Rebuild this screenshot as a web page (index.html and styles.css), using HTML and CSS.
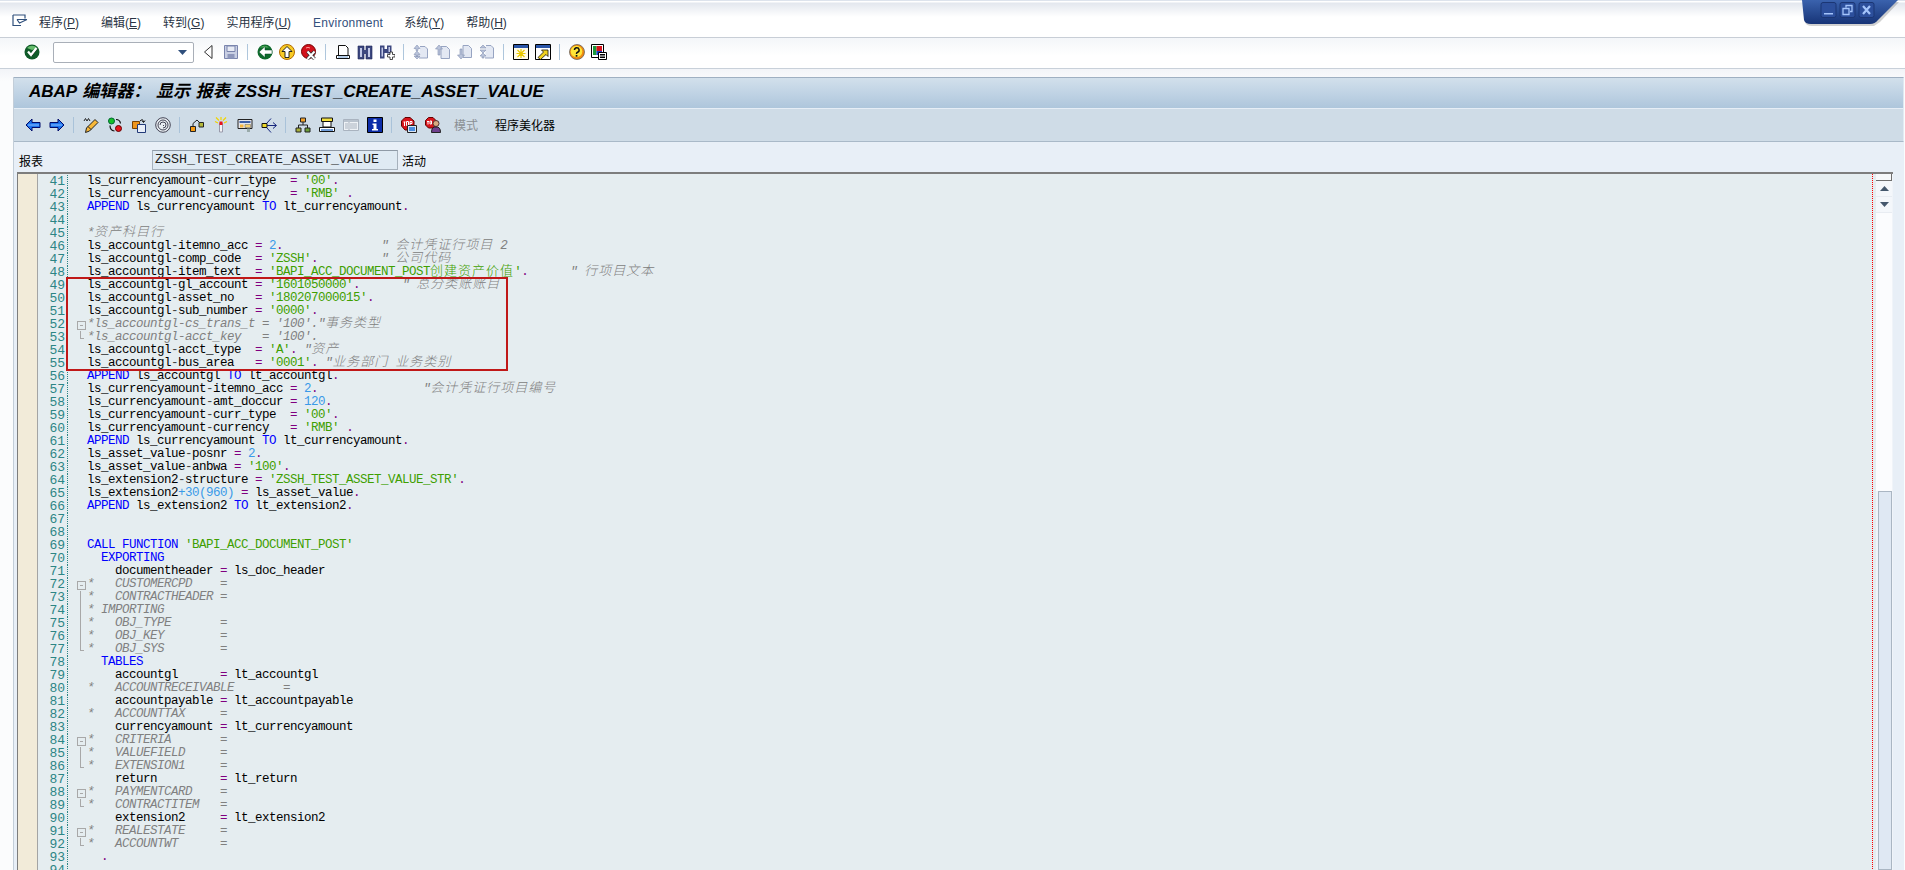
FILE: index.html
```html
<!DOCTYPE html>
<html lang="zh">
<head>
<meta charset="utf-8">
<title>ABAP 编辑器</title>
<link rel="stylesheet" href="styles.css">
</head>
<body>
<div class="winctl">
<svg width="100" height="28" viewBox="0 0 100 28"><defs><linearGradient id="wb" x1="0" y1="0" x2="0" y2="1"><stop offset="0" stop-color="#3a62ad"/><stop offset="1" stop-color="#173477"/></linearGradient></defs><path d="M1 2L3 22Q4 26 10 26L72 26L78 22L97 2Z" fill="#000" opacity=".18"/><path d="M0 0L2 20Q3 24 9 24L68 24Q73 24 76 20L96 0Z" fill="url(#wb)"/><g fill="#2c4f9c" stroke="#1b3674"><rect x="19" y="2.500" width="15" height="15" rx="2"/><rect x="38" y="2.500" width="15" height="15" rx="2"/><rect x="57" y="2.500" width="15" height="15" rx="2"/></g><path d="M22 13h9v1.500h-9z" fill="#a4c4fb"/><path d="M44 7.500v-2h6v6h-2M41 8.500h6v6h-6z" fill="none" stroke="#a4c4fb" stroke-width="1.300"/><path d="M61 6l7 8M68 6l-7 8" stroke="#a4c4fb" stroke-width="2.200"/></svg>
</div>
<header class="menubar">
<svg class="menuicon" viewBox="0 0 16 14"><path d="M1 1h12v3.500M1 1v10.500h8M5 5.500h10M5 5.500l2.500 3.500L15 5.500" fill="none" stroke="#30507c" stroke-width="1.200"/></svg>
<nav class="menu">
<span class="mi">程序(<u>P</u>)</span>
<span class="mi">编辑(<u>E</u>)</span>
<span class="mi">转到(<u>G</u>)</span>
<span class="mi">实用程序(<u>U</u>)</span>
<span class="mi env">Environment</span>
<span class="mi">系统(<u>Y</u>)</span>
<span class="mi">帮助(<u>H</u>)</span>
</nav>
</header>
<div class="systb">
<span class="slot"><svg class="ic" viewBox="0 0 16 16"><circle cx="8" cy="8" r="7.500" fill="#0f5a28"/><path d="M3 4a6.500 6.500 0 0 1 10 0l-5 2z" fill="#66bd6c"/><path d="M4 7.500l3 3.500 5.500-7" fill="none" stroke="#000" stroke-width="1" transform="translate(.5 1)"/><path d="M4 7.500l3 3.500 5.500-7" fill="none" stroke="#fff" stroke-width="2.300"/></svg></span>
<div class="cmd"><svg class="cmdarrow" viewBox="0 0 9 5"><path d="M0 0h9L4.500 5z" fill="#2f4f7c"/></svg></div>
<span class="slot navtri"><svg class="ic" viewBox="0 0 16 16"><path d="M11 1.500L3.500 8l7.500 6.500z" fill="#fff" stroke="#333"/></svg></span>
<span class="slot"><svg class="ic" viewBox="0 0 16 16"><path d="M1.500 1.500h13v13h-13z" fill="#c9cfe3" stroke="#7b85ad"/><path d="M4 2h8v5.500H4z" fill="#e8ebf4" stroke="#7b85ad"/><path d="M4.500 10h7v4.500h-7z" fill="#8f98bc"/></svg></span>
<i class="sep"></i>
<span class="slot"><svg class="ic" viewBox="0 0 16 16"><circle cx="8" cy="8" r="7.500" fill="#0e6a2c"/><path d="M3 3.500a6.500 6.500 0 0 1 9 0z" fill="#4fae58"/><path d="M2 8l6-5.500v3.500h7v4H8v3.500z" fill="#fff" stroke="#042" stroke-width=".5"/></svg></span>
<span class="slot"><svg class="ic" viewBox="0 0 16 16"><circle cx="8" cy="8" r="7.500" fill="#f8cb24" stroke="#b26a00"/><path d="M8 2.500l5 5h-3v6H6v-6H3z" fill="#fff" stroke="#111" stroke-width=".9"/></svg></span>
<span class="slot"><svg class="ic" viewBox="0 0 16 16"><circle cx="7.500" cy="7.500" r="7" fill="#d3111b" stroke="#700"/><path d="M5 4a3 2 0 0 1 4 0" stroke="#ff9a9a" fill="none"/><path d="M6.500 7.500l7 7.500M13.500 7.500l-7 7.500" stroke="#333" stroke-width="3.400"/><path d="M6.500 7.500l7 7.500M13.500 7.500l-7 7.500" stroke="#fff" stroke-width="1.900"/></svg></span>
<i class="sep"></i>
<span class="slot"><svg class="ic" viewBox="0 0 16 16"><path d="M3.500 1.500h7l2.500 2.500v7.500h-9.500z" fill="#fff" stroke="#111"/><path d="M1.500 11.500h13v3h-13z" fill="#fff" stroke="#111"/><path d="M3 13h10" stroke="#6a9ad0"/></svg></span>
<span class="slot"><svg class="ic" viewBox="0 0 16 16"><path d="M1 2h6v13H1zM9 2h6v13H9z" fill="#3c477f" stroke="#1d2658" stroke-width=".6"/><path d="M6 6h4v4H6z" fill="#3c477f"/><path d="M3 4h2v9H3zM11 4h2v9h-2z" fill="#c2c9e8"/></svg></span>
<span class="slot"><svg class="ic" viewBox="0 0 16 16"><path d="M1 1.500h4.500v13H1zM8 1.500h4.500v8H8z" fill="#3c477f"/><path d="M5 5h3v4H5z" fill="#3c477f"/><path d="M2.500 3.500h1.500v9H2.500zM9.500 3h1.500v5H9.500z" fill="#c2c9e8"/><path d="M11 8h2.500v2.500H16V13h-2.500v2.500H11V13H8.500v-2.500H11z" fill="#fff" stroke="#222" stroke-width=".8"/></svg></span>
<i class="sep"></i>
<span class="slot"><svg class="ic" viewBox="0 0 16 16"><path d="M7 2.500h5l2.500 2.500v9H6" fill="#e3e8f3" stroke="#97a4c2"/><path d="M4 1L1 4.500h2v2h2v-2h2zM4 7L1 10.500h2v2h2v-2h2zM4 15l3-3H1z" fill="#b9c3da" stroke="#8492b3" stroke-width=".6"/></svg></span>
<span class="slot"><svg class="ic" viewBox="0 0 16 16"><path d="M6 2.500h5.500l3 3v9H6z" fill="#e3e8f3" stroke="#97a4c2"/><path d="M4 1L.5 5H3v6h2V5h2.500z" fill="#b9c3da" stroke="#8492b3" stroke-width=".6"/></svg></span>
<span class="slot"><svg class="ic" viewBox="0 0 16 16"><path d="M6 1.500h5.500l3 3v9H6z" fill="#e3e8f3" stroke="#97a4c2"/><path d="M4 15L.5 11H3V5h2v6h2.500z" fill="#b9c3da" stroke="#8492b3" stroke-width=".6"/></svg></span>
<span class="slot"><svg class="ic" viewBox="0 0 16 16"><path d="M7 1.500h5l2.500 2.500v10H6" fill="#e3e8f3" stroke="#97a4c2"/><path d="M4 1L1 4h6zM4 9l3-3H1zM4 9L1 12h2v2h2v-2h2z" fill="#b9c3da" stroke="#8492b3" stroke-width=".6"/></svg></span>
<i class="sep"></i>
<span class="slot"><svg class="ic" viewBox="0 0 16 16"><path d="M.5.500h15v15H.5z" fill="#fffbe8" stroke="#000"/><path d="M1 1h14v3H1z" fill="#2a55a8"/><path d="M8 5v9M3.500 9.500h9M4.500 6l7 7M11.500 6l-7 7" stroke="#e9c800" stroke-width="1.200"/></svg></span>
<span class="slot"><svg class="ic" viewBox="0 0 16 16"><path d="M.5.500h15v15H.5z" fill="#fff" stroke="#000"/><path d="M1 1h14v3H1z" fill="#2a55a8"/><path d="M3 13.500L8.500 8 6.500 6h6.500v6.500l-2-2L5.500 15.500z" fill="#f2d21e" stroke="#111" stroke-width=".8"/></svg></span>
<i class="sep"></i>
<span class="slot"><svg class="ic" viewBox="0 0 16 16"><circle cx="8" cy="8" r="7.500" fill="#ef8a10" stroke="#555" stroke-width=".7"/><circle cx="7.500" cy="7.500" r="5.800" fill="#ffe538"/><path d="M5.500 6a2.300 2.300 0 1 1 3 2.200Q7.500 8.800 7.500 10" fill="none" stroke="#111" stroke-width="1.500"/><path d="M6.700 11h1.700v1.700H6.700z" fill="#111"/></svg></span>
<span class="slot"><svg class="ic" viewBox="0 0 16 16"><path d="M.5.500h12v13H.5z" fill="#fff" stroke="#000"/><path d="M2 2h3.500v9H2z" fill="#1a9a3a"/><path d="M5.500 2H11v5H5.500z" fill="#d8141c"/><path d="M5.500 7H11v4H5.500z" fill="#1a3bcc"/><path d="M7.500 8.500h8v7h-8z" fill="#fff" stroke="#000"/><path d="M9 10.500h5M9 12h5M9 13.500h5" stroke="#000"/></svg></span>
</div>
<main class="work">
<section class="panel">
<h1 class="title">ABAP <span class="tj">编辑器</span>： <span class="tj">显示</span> <span class="tj">报表</span> ZSSH_TEST_CREATE_ASSET_VALUE</h1>
<div class="apptb">
<span class="aslot"><svg class="ic" viewBox="0 0 16 16"><path d="M1 8l6-6v3.500h8v5H7V14z" fill="#1d74ee" stroke="#000a6a"/><path d="M3 8h11" stroke="#8fc0ff"/></svg></span>
<span class="aslot"><svg class="ic" viewBox="0 0 16 16"><path d="M15 8L9 2v3.500H1v5h8V14z" fill="#1d74ee" stroke="#000a6a"/><path d="M2 8h11" stroke="#8fc0ff"/></svg></span>
<i class="asep"></i>
<span class="aslot"><svg class="ic" viewBox="0 0 16 16"><path d="M2.500 15.500l1-4.500L12 2.500l3 3-8.500 8.500z" fill="#f8b838" stroke="#222"/><path d="M5 9.500l3 3" stroke="#222"/><path d="M1 4l1.500-2.500L4 4l1.500-2.500L7 4" fill="none" stroke="#222"/></svg></span>
<span class="aslot"><svg class="ic" viewBox="0 0 16 16"><circle cx="4.500" cy="4" r="3" fill="#16c02a" stroke="#063"/><circle cx="11.500" cy="11.500" r="3" fill="#e8141c" stroke="#600"/><path d="M9 2.500q4 0 4.500 4M3 8.500q0 5 4.500 5.500" fill="none" stroke="#111" stroke-width="1.200"/></svg></span>
<span class="aslot"><svg class="ic" viewBox="0 0 16 16"><path d="M1.500 4.500h7v7h-7z" fill="#f0961c" stroke="#7a4200"/><path d="M6.500 7.500h8v8h-8z" fill="#e8eef8" stroke="#223a78"/><path d="M9 4q3-3 3.500 1M11 3.500l1.500 2 1.500-2" fill="none" stroke="#111"/></svg></span>
<span class="aslot"><svg class="ic" viewBox="0 0 16 16"><circle cx="8" cy="8" r="7.300" fill="#e9eef2" stroke="#445"/><circle cx="8" cy="8" r="5" fill="none" stroke="#445"/><path d="M8 11a3 3 0 1 0-3-3M8 8.500h1" fill="none" stroke="#445"/></svg></span>
<i class="asep"></i>
<span class="aslot"><svg class="ic" viewBox="0 0 16 16"><path d="M1.500 9.500h5v5h-5z" fill="#f59a14" stroke="#222"/><path d="M10 5.500h4.500v4.500H10z" fill="#b4b83a" stroke="#222"/><path d="M4 9.500V6.500L8 3l2.500 2.500" fill="none" stroke="#222"/></svg></span>
<span class="aslot"><svg class="ic" viewBox="0 0 16 16"><path d="M6.500 6h3v9h-3z" fill="#f3f3f6" stroke="#99a"/><path d="M6.500 4.500h3V8h-3z" fill="#e8141c"/><path d="M8 0v3M2 4.500l3 1.500M14 4.500l-3 1.500M3 .5l3 3M13 .5l-3 3" stroke="#f1d400" stroke-width="1.200"/></svg></span>
<span class="aslot"><svg class="ic" viewBox="0 0 16 16"><path d="M1 2.500h14v9H1z" fill="#e6e6ea" stroke="#222"/><path d="M2.500 4h11v2h-11z" fill="#3b5ea8"/><path d="M3 7.500h3.500v3H3z" fill="#f5b640"/><path d="M8 7.500h5.500v3H8z" fill="#f5d070" stroke="#444" stroke-width=".4"/><path d="M10 11.500h3V15h-3z" fill="#9aa"/></svg></span>
<span class="aslot"><svg class="ic" viewBox="0 0 16 16"><path d="M1 6.500h5v4H1z" fill="#ecd82a" stroke="#111"/><path d="M6 8.500h9M12 5.500l3.500 3-3.500 3M6 6l4-4.500M6 11l4 4.500" fill="none" stroke="#15257c"/></svg></span>
<i class="asep"></i>
<span class="aslot"><svg class="ic" viewBox="0 0 16 16"><path d="M5.500 1h5v4h-5z" fill="#f2a028" stroke="#222"/><path d="M1 11h5v4H1z" fill="#a8b03a" stroke="#222"/><path d="M10 11h5v4h-5z" fill="#6c9e3a" stroke="#222"/><path d="M8 5v3M3.500 11V8h9v3" fill="none" stroke="#222"/></svg></span>
<span class="aslot"><svg class="ic" viewBox="0 0 16 16"><path d="M2.500 1h11v3.500h-11z" fill="#f2e040" stroke="#111"/><path d="M4 4.500h8V10H4z" fill="#fff" stroke="#111"/><path d="M.5 10.500h15v4H.5z" fill="#fff" stroke="#111"/><path d="M2 13h12" stroke="#3f7ac8" stroke-width="1.500"/></svg></span>
<span class="aslot"><svg class="ic" viewBox="0 0 16 16"><path d="M.5 2.500h15v11H.5z" fill="#eef2f6" stroke="#a9b3bf"/><path d="M1 3h14v2H1z" fill="#b9c3ce"/><path d="M6 5v8" stroke="#a9b3bf"/><path d="M2 7h3M2 9h3M2 11h3M7 7h7M7 9h7M7 11h7" stroke="#a9b3bf"/></svg></span>
<span class="aslot"><svg class="ic" viewBox="0 0 16 16"><path d="M.5.500h15v15H.5z" fill="#0c2ca8" stroke="#000"/><path d="M6.500 2.500h3V5h-3zM5.500 6.500h4V12h1.500v1.500H5V12h1.500V8h-1z" fill="#fff"/></svg></span>
<i class="asep"></i>
<span class="aslot"><svg class="ic" viewBox="0 0 16 16"><path d="M4 .5h5L13 4v5l-4 4H4L.5 9V4z" fill="#d8141c" stroke="#600"/><path d="M2.500 5h2M3.500 5v4M5.500 4.500h2v4h-2zM9 8V4.500h2v2H9" fill="none" stroke="#fff"/><path d="M6.500 8.500h9v7h-9z" fill="#dce6f4" stroke="#222"/><path d="M8 10h6v4H8z" fill="#4a8ee0"/></svg></span>
<span class="aslot"><svg class="ic" viewBox="0 0 16 16"><path d="M3.500.5h4.500L11 3.500v4L8 11H3.500L.5 8V3.500z" fill="#d8141c" stroke="#600"/><path d="M2 4.500h2M3 4.500v3M5 4v3h1.500V4z" fill="none" stroke="#fff"/><circle cx="11" cy="6.500" r="3" fill="#d8ab80" stroke="#533"/><path d="M6.500 15.500q0-6 4.500-5.500 4.500-.5 4.500 5.500z" fill="#70408e" stroke="#222"/></svg></span>
<span class="atext off">模式</span>
<span class="atext">程序美化器</span>
</div>
<div class="selrow">
<label class="sellabel">报表</label>
<span class="field">ZSSH_TEST_CREATE_ASSET_VALUE</span>
<span class="status">活动</span>
</div>
<div class="editor">
<div class="gutter"></div>
<div class="lines">
<div class="mark"></div>
<div class="row"><span class="no">41</span><span class="fold"></span><span class="code">ls_currencyamount<q>-</q>curr_type  <b>=</b> <em>'00'</em><b>.</b></span></div>
<div class="row"><span class="no">42</span><span class="fold"></span><span class="code">ls_currencyamount<q>-</q>currency   <b>=</b> <em>'RMB'</em> <b>.</b></span></div>
<div class="row"><span class="no">43</span><span class="fold"></span><span class="code"><s>APPEND</s> ls_currencyamount <s>TO</s> lt_currencyamount<b>.</b></span></div>
<div class="row"><span class="no">44</span><span class="fold"></span><span class="code"></span></div>
<div class="row"><span class="no">45</span><span class="fold"></span><span class="code"><i>*<u>资产科目行</u></i></span></div>
<div class="row"><span class="no">46</span><span class="fold"></span><span class="code">ls_accountgl<q>-</q>itemno_acc <b>=</b> <dfn>2</dfn><b>.</b>              <i>" <u>会计凭证行项目</u> 2</i></span></div>
<div class="row"><span class="no">47</span><span class="fold"></span><span class="code">ls_accountgl<q>-</q>comp_code  <b>=</b> <em>'ZSSH'</em><b>.</b>         <i>" <u>公司代码</u></i></span></div>
<div class="row"><span class="no">48</span><span class="fold"></span><span class="code">ls_accountgl<q>-</q>item_text  <b>=</b> <em>'BAPI_ACC_DOCUMENT_POST<u>创建资产价值</u>'</em><b>.</b>      <i>" <u>行项目文本</u></i></span></div>
<div class="row"><span class="no">49</span><span class="fold"></span><span class="code">ls_accountgl<q>-</q>gl_account <b>=</b> <em>'1601050000'</em><b>.</b>      <i>" <u>总分类账账目</u></i></span></div>
<div class="row"><span class="no">50</span><span class="fold"></span><span class="code">ls_accountgl<q>-</q>asset_no   <b>=</b> <em>'180207000015'</em><b>.</b></span></div>
<div class="row"><span class="no">51</span><span class="fold"></span><span class="code">ls_accountgl<q>-</q>sub_number <b>=</b> <em>'0000'</em><b>.</b></span></div>
<div class="row"><span class="no">52</span><span class="fold box"></span><span class="code"><i>*ls_accountgl-cs_trans_t = '100'."<u>事务类型</u></i></span></div>
<div class="row"><span class="no">53</span><span class="fold end"></span><span class="code"><i>*ls_accountgl-acct_key   = '100'.</i></span></div>
<div class="row"><span class="no">54</span><span class="fold"></span><span class="code">ls_accountgl<q>-</q>acct_type  <b>=</b> <em>'A'</em><b>.</b> <i>"<u>资产</u></i></span></div>
<div class="row"><span class="no">55</span><span class="fold"></span><span class="code">ls_accountgl<q>-</q>bus_area   <b>=</b> <em>'0001'</em><b>.</b> <i>"<u>业务部门</u> <u>业务类别</u></i></span></div>
<div class="row"><span class="no">56</span><span class="fold"></span><span class="code"><s>APPEND</s> ls_accountgl <s>TO</s> lt_accountgl<b>.</b></span></div>
<div class="row"><span class="no">57</span><span class="fold"></span><span class="code">ls_currencyamount<q>-</q>itemno_acc <b>=</b> <dfn>2</dfn><b>.</b>               <i>"<u>会计凭证行项目编号</u></i></span></div>
<div class="row"><span class="no">58</span><span class="fold"></span><span class="code">ls_currencyamount<q>-</q>amt_doccur <b>=</b> <dfn>120</dfn><b>.</b></span></div>
<div class="row"><span class="no">59</span><span class="fold"></span><span class="code">ls_currencyamount<q>-</q>curr_type  <b>=</b> <em>'00'</em><b>.</b></span></div>
<div class="row"><span class="no">60</span><span class="fold"></span><span class="code">ls_currencyamount<q>-</q>currency   <b>=</b> <em>'RMB'</em> <b>.</b></span></div>
<div class="row"><span class="no">61</span><span class="fold"></span><span class="code"><s>APPEND</s> ls_currencyamount <s>TO</s> lt_currencyamount<b>.</b></span></div>
<div class="row"><span class="no">62</span><span class="fold"></span><span class="code">ls_asset_value<q>-</q>posnr <b>=</b> <dfn>2</dfn><b>.</b></span></div>
<div class="row"><span class="no">63</span><span class="fold"></span><span class="code">ls_asset_value<q>-</q>anbwa <b>=</b> <em>'100'</em><b>.</b></span></div>
<div class="row"><span class="no">64</span><span class="fold"></span><span class="code">ls_extension2<q>-</q>structure <b>=</b> <em>'ZSSH_TEST_ASSET_VALUE_STR'</em><b>.</b></span></div>
<div class="row"><span class="no">65</span><span class="fold"></span><span class="code">ls_extension2<dfn>+30(960)</dfn> <b>=</b> ls_asset_value<b>.</b></span></div>
<div class="row"><span class="no">66</span><span class="fold"></span><span class="code"><s>APPEND</s> ls_extension2 <s>TO</s> lt_extension2<b>.</b></span></div>
<div class="row"><span class="no">67</span><span class="fold"></span><span class="code"></span></div>
<div class="row"><span class="no">68</span><span class="fold"></span><span class="code"></span></div>
<div class="row"><span class="no">69</span><span class="fold"></span><span class="code"><s>CALL FUNCTION</s> <em>'BAPI_ACC_DOCUMENT_POST'</em></span></div>
<div class="row"><span class="no">70</span><span class="fold"></span><span class="code">  <s>EXPORTING</s></span></div>
<div class="row"><span class="no">71</span><span class="fold"></span><span class="code">    documentheader <b>=</b> ls_doc_header</span></div>
<div class="row"><span class="no">72</span><span class="fold box"></span><span class="code"><i>*   CUSTOMERCPD    =</i></span></div>
<div class="row"><span class="no">73</span><span class="fold bar"></span><span class="code"><i>*   CONTRACTHEADER =</i></span></div>
<div class="row"><span class="no">74</span><span class="fold bar"></span><span class="code"><i>* IMPORTING</i></span></div>
<div class="row"><span class="no">75</span><span class="fold bar"></span><span class="code"><i>*   OBJ_TYPE       =</i></span></div>
<div class="row"><span class="no">76</span><span class="fold bar"></span><span class="code"><i>*   OBJ_KEY        =</i></span></div>
<div class="row"><span class="no">77</span><span class="fold end"></span><span class="code"><i>*   OBJ_SYS        =</i></span></div>
<div class="row"><span class="no">78</span><span class="fold"></span><span class="code">  <s>TABLES</s></span></div>
<div class="row"><span class="no">79</span><span class="fold"></span><span class="code">    accountgl      <b>=</b> lt_accountgl</span></div>
<div class="row"><span class="no">80</span><span class="fold"></span><span class="code"><i>*   ACCOUNTRECEIVABLE       =</i></span></div>
<div class="row"><span class="no">81</span><span class="fold"></span><span class="code">    accountpayable <b>=</b> lt_accountpayable</span></div>
<div class="row"><span class="no">82</span><span class="fold"></span><span class="code"><i>*   ACCOUNTTAX     =</i></span></div>
<div class="row"><span class="no">83</span><span class="fold"></span><span class="code">    currencyamount <b>=</b> lt_currencyamount</span></div>
<div class="row"><span class="no">84</span><span class="fold box"></span><span class="code"><i>*   CRITERIA       =</i></span></div>
<div class="row"><span class="no">85</span><span class="fold bar"></span><span class="code"><i>*   VALUEFIELD     =</i></span></div>
<div class="row"><span class="no">86</span><span class="fold end"></span><span class="code"><i>*   EXTENSION1     =</i></span></div>
<div class="row"><span class="no">87</span><span class="fold"></span><span class="code">    return         <b>=</b> lt_return</span></div>
<div class="row"><span class="no">88</span><span class="fold box"></span><span class="code"><i>*   PAYMENTCARD    =</i></span></div>
<div class="row"><span class="no">89</span><span class="fold end"></span><span class="code"><i>*   CONTRACTITEM   =</i></span></div>
<div class="row"><span class="no">90</span><span class="fold"></span><span class="code">    extension2     <b>=</b> lt_extension2</span></div>
<div class="row"><span class="no">91</span><span class="fold box"></span><span class="code"><i>*   REALESTATE     =</i></span></div>
<div class="row"><span class="no">92</span><span class="fold end"></span><span class="code"><i>*   ACCOUNTWT      =</i></span></div>
<div class="row"><span class="no">93</span><span class="fold"></span><span class="code">  <b>.</b></span></div>
<div class="row"><span class="no">94</span><span class="fold"></span><span class="code"></span></div>
</div>
<div class="vbar">
<div class="vcap"></div>
<div class="vbtn"><svg class="varrow" viewBox="0 0 9 5"><path d="M4.500 0L9 5H0z" fill="#44576c"/></svg></div>
<div class="vbtn"><svg class="varrow" viewBox="0 0 9 5"><path d="M0 0h9L4.500 5z" fill="#44576c"/></svg></div>
<div class="vtrack"></div>
<div class="vthumb"></div>
</div>
</div>
</section>
</main>
</body>
</html>
```
FILE: styles.css
```css
* { box-sizing: border-box; }
html, body { margin: 0; height: 870px; overflow: hidden; background: #fff; }
body {
  display: flex;
  flex-direction: column;
  font: 12px/16px "Liberation Sans", "Noto Sans CJK SC", sans-serif;
  color: #000;
  position: relative;
}
.winctl { position: absolute; top: 0; left: 1802px; width: 100px; height: 28px; z-index: 2; }
.winctl svg { display: block; }

.menubar {
  height: 38px;
  flex: none;
  display: flex;
  align-items: flex-start;
  border-bottom: 1px solid #c8ced6;
  background: linear-gradient(#dde3ec 0, #dde3ec 1px, #fff 1px, #fff 2px, #e3e7ee 3px, #fff 17px);
}
.menuicon { width: 16px; height: 14px; margin: 14px 0 0 12px; flex: none; }
.menu { display: flex; margin: 15px 0 0 11px; color: #2a3444; }
.mi { margin-right: 22px; white-space: nowrap; }
.mi u { text-underline-offset: 1px; }
.env { color: #34507c; letter-spacing: .25px; margin-right: 21px; }

.systb {
  height: 31px;
  flex: none;
  display: flex;
  align-items: center;
  padding: 0 0 2px 21px;
  border-bottom: 1px solid #c8d0d9;
  background: linear-gradient(#f4f6f9, #fff 60%);
}
.slot { width: 22px; height: 16px; flex: none; display: flex; justify-content: center; }
.ic { width: 16px; height: 16px; display: block; }
.sep { width: 1px; height: 16px; margin: 0 6px 0 5px; flex: none; background: #aec6dc; }
.cmd {
  width: 141px; height: 21px; margin: 0 4px 0 10px; flex: none;
  border: 1px solid #a9afb8; border-radius: 2px; background: #fff;
  display: flex; align-items: center; justify-content: flex-end; padding-right: 6px;
}
.cmdarrow { width: 9px; height: 5px; }
.navtri { margin-left: 0; }

.work {
  flex: 1;
  min-height: 0;
  padding: 8px 1px 0 13px;
  background: linear-gradient(#f2f4f8, #fbfcfd 12px);
}
.panel {
  height: 100%;
  background: #e8eff7;
  display: flex;
  flex-direction: column;
  border-left: 1px solid #c3ced9;
}
.title {
  margin: 0;
  height: 32px;
  flex: none;
  padding-left: 15px;
  font: italic bold 17px/28px "Liberation Sans", "Noto Sans CJK SC", sans-serif;
  word-spacing: 1px;
  white-space: pre;
  border-top: 1px solid #9fb0c2;
  border-bottom: 1px solid #e6eef6;
  border-right: 1px solid #dfe8f1;
  background: linear-gradient(#d2e0ec, #aec6dc);
}
.tj { font-weight: 700; }
.apptb {
  height: 33px;
  flex: none;
  display: flex;
  align-items: center;
  padding-left: 7px;
  background: #cfdce7;
  border-bottom: 1px solid #a9b9c8;
  border-right: 1px solid #e3ebf3;
}
.aslot { width: 24px; height: 16px; flex: none; display: flex; justify-content: center; }
.asep { width: 1px; height: 16px; margin: 0 5px 0 4px; flex: none; background: #a9c2d9; }
.atext { font-family: "Noto Sans CJK SC", sans-serif; font-size: 12px; margin-left: 9px; flex: none; }
.atext.off { color: #8a8f94; margin-right: 8px; }

.selrow {
  height: 30px;
  flex: none;
  display: flex;
  align-items: flex-start;
  padding-left: 5px;
  font-family: "Noto Sans CJK SC", sans-serif;
}
.sellabel { width: 133px; margin-top: 11px; flex: none; }
.field {
  width: 246px; height: 20px; margin-top: 8px; flex: none;
  border: 1px solid #a6b1bc; border-top-color: #8f9aa6;
  background: #dfeaf3;
  padding-left: 2px;
  font: 13.33px/18px "Liberation Mono", monospace;
  color: #222;
  white-space: pre;
}
.status { margin: 11px 0 0 4px; }

.editor {
  flex: 1;
  min-height: 0;
  margin: 0 11px 0 3px;
  display: flex;
  overflow: hidden;
  border-top: 2px solid #7d7d7d;
  border-left: 1px solid #7d7d7d;
  background: #e5edf0;
}
.gutter { width: 20px; flex: none; background: #f2ebd9; border-right: 1px solid #a4a4a4; }
.lines { flex: 1; min-width: 0; position: relative; padding-top: 1px; overflow: hidden; }
.lines::after {
  content: "";
  position: absolute; top: 0; bottom: 0; right: 3px; width: 1px;
  background: repeating-linear-gradient(#f00 0, #f00 1px, transparent 1px, transparent 2px);
}
.mark { position: absolute; left: 28px; top: 103px; width: 442px; height: 94px; border: 2px solid #c01818; z-index: 1; }
.row {
  height: 13px;
  display: flex;
  font: 12.5px/13px "Liberation Mono", "Noto Sans CJK SC", monospace;
  letter-spacing: -.5px;
  white-space: pre;
}
.no {
  width: 30px; flex: none; padding-right: 2px; text-align: right;
  color: #2c8585; letter-spacing: 0; font-size: 13px;
  border-right: 1px dotted #2c8585;
}
.fold { width: 19px; flex: none; position: relative; }
.fold.box::before {
  content: ""; position: absolute; left: 9px; top: 3px; width: 7px; height: 7px;
  border: 1px solid #a8a8a8; background: linear-gradient(#a8a8a8, #a8a8a8) center / 3px 1px no-repeat;
}
.fold.bar::before { content: ""; position: absolute; left: 12px; top: 0; bottom: 0; width: 1px; background: #a8a8a8; }
.fold.end::before {
  content: ""; position: absolute; left: 12px; top: 0; height: 7px; width: 3px;
  border-left: 1px solid #a8a8a8; border-bottom: 1px solid #a8a8a8;
}
.code { flex: 1; }
.code u { text-decoration: none; font-size: 13px; line-height: 0; letter-spacing: 1px; font-family: "Noto Sans CJK SC", sans-serif; font-weight: 300; }
.code b { font-weight: 400; color: #800080; }
.code s { text-decoration: none; color: #0000ff; }
.code em { font-style: normal; color: #3f9f00; }
.code i { color: #808080; font-style: italic; }
.code q { quotes: none; color: #444; }
.code dfn { font-style: normal; color: #3a9ae8; }

.vbar { width: 17px; flex: none; display: flex; flex-direction: column; background: #f0f4f9; padding-right: 1px; }
.vcap { height: 7px; flex: none; background: #f7f9fb; border-right: 1px solid #6f6f6f; border-bottom: 1px solid #6f6f6f; }
.vbtn { height: 16px; flex: none; display: flex; align-items: center; justify-content: center; background: #f4f7fb; border-bottom: 1px solid #e8ecf2; }
.varrow { width: 9px; height: 5px; }
.vtrack { height: 278px; flex: none; background: #fbfcfe; }
.vthumb { flex: 1; margin: 0 0 0 2px; background: #dfe8f3; border: 1px solid #aab6c3; }
```
